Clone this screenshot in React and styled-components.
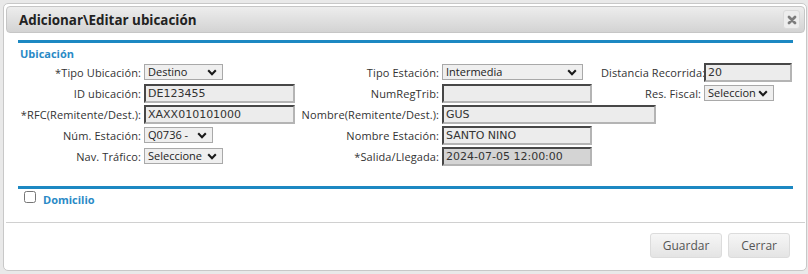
import React from 'react';
import styled, { createGlobalStyle } from 'styled-components';

const Global = createGlobalStyle`
  html, body { margin: 0; padding: 0; background: #e9e9e9; }
  body { width: 808px; height: 274px; overflow: hidden; font-family: "Open Sans", Arial, sans-serif; color: #333; }
  * { box-sizing: border-box; }
`;

const Page = styled.div`
  padding: 3px 1px 0 3px;
`;

const Dialog = styled.div`
  width: 804px;
  height: 268px;
  border: 1px solid #c8c8c8;
  border-radius: 5px;
  background: #fff;
  padding: 2px 1px 0 2px;
  display: flex;
  flex-direction: column;
`;

const TitleBar = styled.div`
  height: 27px;
  border: 1px solid #c6c6c6;
  border-radius: 4px;
  background: linear-gradient(#ededed, #d3d3d3);
  display: flex;
  align-items: center;
  justify-content: space-between;
  padding: 0 4px 0 12px;
`;

const Title = styled.span`
  font-weight: 700;
  font-size: 13.4px;
  color: #222;
`;

const CloseButton = styled.button`
  width: 17px;
  height: 19px;
  padding: 0;
  border: 1px solid #dadada;
  border-radius: 3px;
  background: #ededed;
  display: flex;
  align-items: center;
  justify-content: center;
`;

const Body = styled.div`
  padding: 7px 12px 0 12px;
`;

const Section = styled.div`
  border-top: 3px solid #1c88c2;
  margin-top: ${p => p.$mt || 0}px;
`;

const Legend = styled.div`
  font-weight: 700;
  font-size: 11px;
  line-height: 15px;
  color: #2a8ac6;
  padding-left: 2px;
  margin-top: 3px;
`;

const FormGrid = styled.div`
  display: grid;
  grid-template-columns: 126px 156px 142px 159px 103px 89px;
  grid-auto-rows: 21px;
  align-items: center;
  margin-top: 1px;
`;

const Label = styled.label`
  font-size: 11px;
  color: #333;
  text-align: right;
  padding-right: 3px;
  white-space: nowrap;
  letter-spacing: 0.1px;
`;

const Cell = styled.div`
  grid-column: span ${p => p.$span || 1};
  display: flex;
  align-items: center;
`;

const TextInput = styled.input`
  width: ${p => p.$w}px;
  height: 19px;
  border: 2px solid;
  border-color: #474747 #b4b4b4 #b4b4b4 #474747;
  background: ${p => (p.$dark ? '#d4d4d4' : '#ececec')};
  font-family: "DejaVu Sans", Verdana, sans-serif;
  font-size: 11px;
  color: #333;
  padding: 0 2px;
  outline: none;
`;

const SelectBox = styled.button`
  width: ${p => p.$w}px;
  height: 16px;
  border: 1px solid #a9a9a9;
  border-radius: 0;
  background: #efefef;
  display: flex;
  align-items: center;
  gap: 2px;
  padding: 0 5px 0 3px;
  margin-top: -1px;
  font-family: "Open Sans", Arial, sans-serif;
  font-size: 11px;
  color: #222;
`;

const SelectText = styled.span`
  flex: 1;
  min-width: 0;
  overflow: hidden;
  white-space: nowrap;
  text-align: left;
  line-height: 14px;
`;

const CheckRow = styled.div`
  display: flex;
  align-items: flex-start;
  gap: 7px;
  padding-left: 6px;
  margin-top: 2px;
`;

const Check = styled.input`
  margin: 0;
  width: 12px;
  height: 12px;
`;

const CheckLabel = styled.span`
  font-weight: 700;
  font-size: 11px;
  line-height: 15px;
  color: #2a8ac6;
  margin-top: 1px;
`;

const Footer = styled.div`
  margin-top: auto;
  height: 48px;
  border-top: 1px solid #d0d0d0;
  display: flex;
  justify-content: flex-end;
  gap: 6px;
  padding: 10px 15px 0 0;
`;

const Button = styled.button`
  height: 25px;
  padding: 0 12px;
  border: 1px solid #dcdcdc;
  border-radius: 3px;
  background: linear-gradient(#f6f6f6, #e4e4e4);
  font-family: "Open Sans", Arial, sans-serif;
  font-size: 12px;
  color: #555;
`;

const Drop = ({ w, value }) => (
  <SelectBox type="button" aria-haspopup="listbox" $w={w}>
    <SelectText>{value}</SelectText>
    <svg width="10" height="7" viewBox="0 0 10 7" style={{ flex: 'none' }}>
      <path d="M1.2 1.3 L5 5.2 L8.8 1.3" fill="none" stroke="#1a1a1a" strokeWidth="2.1" />
    </svg>
  </SelectBox>
);

const Field = ({ label, children, span }) => (
  <>
    <Label>{label}</Label>
    <Cell $span={span}>{children}</Cell>
  </>
);

export default function App() {
  return (
    <>
      <Global />
      <Page>
        <Dialog>
          <TitleBar>
            <Title>Adicionar\Editar ubicación</Title>
            <CloseButton aria-label="Cerrar">
              <svg width="10" height="10" viewBox="0 0 10 10">
                <path d="M2 2 L8 8 M8 2 L2 8" stroke="#7d7d7d" strokeWidth="2.8" strokeLinecap="round" />
              </svg>
            </CloseButton>
          </TitleBar>
          <Body>
            <Section>
              <Legend>Ubicación</Legend>
              <FormGrid>
                <Field label="*Tipo Ubicación:"><Drop w={79} value="Destino" /></Field>
                <Field label="Tipo Estación:"><Drop w={141} value="Intermedia" /></Field>
                <Field label="Distancia Recorrida:"><TextInput $w={88} defaultValue="20" /></Field>

                <Field label="ID ubicación:"><TextInput $w={151} defaultValue="DE123455" /></Field>
                <Field label="NumRegTrib:"><TextInput $w={150} defaultValue="" /></Field>
                <Field label="Res. Fiscal:"><Drop w={70} value="Seleccione" /></Field>

                <Field label="*RFC(Remitente/Dest.):"><TextInput $w={151} defaultValue="XAXX010101000" /></Field>
                <Field label="Nombre(Remitente/Dest.):" span={2}><TextInput $w={214} defaultValue="GUS" /></Field>
                <span />

                <Field label="Núm. Estación:"><Drop w={69} value="Q0736 - " /></Field>
                <Field label="Nombre Estación:"><TextInput $w={150} defaultValue="SANTO NINO" /></Field>
                <span /><span />

                <Field label="Nav. Tráfico:"><Drop w={79} value="Seleccione" /></Field>
                <Field label="*Salida/Llegada:"><TextInput $w={150} $dark defaultValue="2024-07-05 12:00:00" readOnly /></Field>
                <span /><span />
              </FormGrid>
            </Section>
            <Section $mt={19}>
              <CheckRow>
                <Check type="checkbox" />
                <CheckLabel>Domicilio</CheckLabel>
              </CheckRow>
            </Section>
          </Body>
          <Footer>
            <Button>Guardar</Button>
            <Button>Cerrar</Button>
          </Footer>
        </Dialog>
      </Page>
    </>
  );
}
